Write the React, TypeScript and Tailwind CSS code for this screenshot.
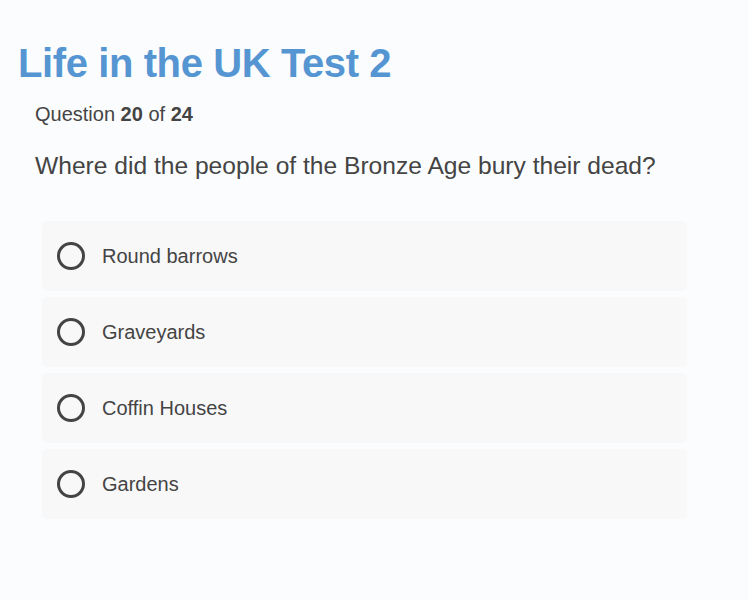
import React, { useState } from 'react';

const options = ['Round barrows', 'Graveyards', 'Coffin Houses', 'Gardens'];

export default function App() {
  const [selected, setSelected] = useState<number | null>(null);

  return (
    <div className="min-h-[600px] w-full bg-[#fbfcfe] font-['Liberation_Sans',Arial,sans-serif] text-[#444]">
      <h1 className="pl-[18px] pt-[40px] text-[40px] font-bold leading-[46px] tracking-[-0.4px] text-[#5596d2]">
        Life in the UK Test 2
      </h1>
      <p className="mt-[16px] pl-[35px] text-[20px] leading-[24px]">
        Question <b>20</b> of <b>24</b>
      </p>
      <h2 className="mt-[25px] pl-[35px] text-[24.6px] leading-[30px]">
        Where did the people of the Bronze Age bury their dead?
      </h2>
      <ul className="mt-[40px] ml-[42px] w-[645px] flex flex-col gap-[6px]">
        {options.map((opt, i) => (
          <li key={opt}>
            <button
              onClick={() => setSelected(i)}
              className="flex h-[70px] w-full items-center rounded-[5px] bg-[#f8f8f8] pl-[15px] text-left"
            >
              <span className="flex h-[28px] w-[28px] items-center justify-center rounded-full border-[3px] border-[#444]">
                {selected === i && <span className="h-[12px] w-[12px] rounded-full bg-[#444]" />}
              </span>
              <span className="ml-[17px] text-[20px]">{opt}</span>
            </button>
          </li>
        ))}
      </ul>
    </div>
  );
}
